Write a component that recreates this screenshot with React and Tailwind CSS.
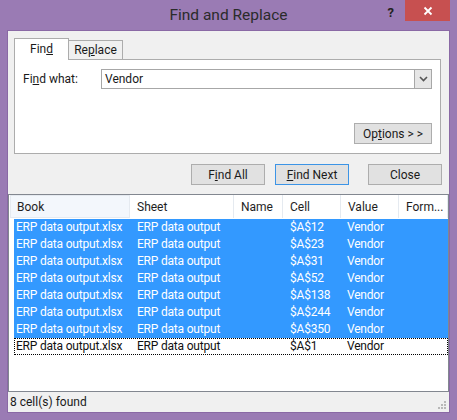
const ROWS = [
  { cell: "$A$12", sel: true },
  { cell: "$A$23", sel: true },
  { cell: "$A$31", sel: true },
  { cell: "$A$52", sel: true },
  { cell: "$A$138", sel: true },
  { cell: "$A$244", sel: true },
  { cell: "$A$350", sel: true },
  { cell: "$A$1", sel: false },
];

const COLS = "grid-cols-[116px_104px_49px_58px_58px_1fr]";

function Btn({ children, focus, className = "" }) {
  return (
    <div
      className={`flex h-[21px] w-[74px] items-center justify-center border bg-[#e1e1e1] text-[12px] text-[#1a1a1a] ${
        focus ? "border-[#3c94e6]" : "border-[#adadad]"
      } ${className}`}
    >
      {children}
    </div>
  );
}

export default function App() {
  return (
    <div
      className="flex h-[420px] w-[457px] flex-col whitespace-nowrap bg-[#9a7bb4]"
      style={{ fontFamily: '"Segoe UI", Roboto, "Noto Sans", sans-serif' }}
    >
      {/* title bar */}
      <div className="grid h-[31px] grid-cols-[1fr_auto_1fr]">
        <div />
        <div className="pt-[4px] text-[15.5px] text-[#2b2b2b]">Find and Replace</div>
        <div className="flex items-start justify-end pr-[7px]">
          <span className="mr-[11px] mt-[3px] text-[13px] font-bold text-[#222]">?</span>
          <div className="flex h-[21px] w-[45px] items-center justify-center bg-[#c75050]">
            <svg width="10" height="10" viewBox="0 0 10 10">
              <path d="M1.5 1.5l7 7M8.5 1.5l-7 7" stroke="#fff" strokeWidth="1.8" />
            </svg>
          </div>
        </div>
      </div>

      {/* client */}
      <div className="mx-[8px] flex flex-1 flex-col bg-[#f0f0f0] outline outline-1 outline-[#8a69a5]">
        <div className="pl-[6px] pr-[8px] pt-[7px]">
          {/* tabs */}
          <div className="flex items-end text-[12px] text-[#1a1a1a]">
            <div className="relative z-10 -mb-px flex h-[22px] w-[55px] items-center justify-center border border-b-0 border-[#acacac] bg-white pb-[2px]">
              <span>
                Fin<u>d</u>
              </span>
            </div>
            <div className="-ml-px flex h-[19px] w-[55px] items-center justify-center border border-b-0 border-[#acacac] bg-[#f0f0f0]">
              <span>
                Re<u>p</u>lace
              </span>
            </div>
          </div>
          {/* panel */}
          <div className="flex h-[95px] flex-col border border-[#acacac] bg-white px-[8px] pt-[9px] pb-[9px]">
            <div className="flex items-center text-[12px] text-[#1a1a1a]">
              <span className="w-[78px]">
                Fi<u>n</u>d what:
              </span>
              <div className="flex h-[20px] flex-1 items-stretch border border-[#a7a7a7] bg-white">
                <span className="flex-1 pl-[3px] leading-[18px]">Vendor</span>
                <div className="flex w-[17px] items-center justify-center border-l border-[#a7a7a7] bg-[#e6e6e6]">
                  <svg width="9" height="6" viewBox="0 0 9 6">
                    <path d="M1 1l3.5 3.5L8 1" fill="none" stroke="#555" strokeWidth="1.6" />
                  </svg>
                </div>
              </div>
            </div>
            <div className="mt-auto flex justify-end">
              <Btn className="w-[78px]">
                <span>
                  Op<u>t</u>ions &gt; &gt;
                </span>
              </Btn>
            </div>
          </div>
        </div>

        {/* buttons */}
        <div className="mt-[10px] flex justify-end pr-[7px]">
          <Btn>
            <span>
              F<u>i</u>nd All
            </span>
          </Btn>
          <Btn focus className="ml-[10px]">
            <span>
              <u>F</u>ind Next
            </span>
          </Btn>
          <Btn className="ml-[19px]">Close</Btn>
        </div>

        {/* results list */}
        <div className="mt-[9px] flex h-[198px] flex-col overflow-hidden border border-[#828790] bg-white text-[12px]">
          <div className="grid h-[23px] shrink-0 grid-cols-[120px_104px_49px_58px_58px_1fr] items-stretch pl-px text-[#1e1e1e]">
            {["Book", "Sheet", "Name", "Cell", "Value", "Form..."].map((h, i) => (
              <div
                key={h}
                className={`flex items-center border-r border-[#e5eaf0] ${
                  i === 0 ? "border border-[#dfe8f2] bg-[#f3f7fc] pl-[6px]" : "pl-[7px]"
                }`}
              >
                {h}
              </div>
            ))}
          </div>
          <div className="ml-[5px] mt-[1px] flex flex-col tracking-[-0.2px]">
            {ROWS.map((r) => (
              <div
                key={r.cell}
                className={`grid h-[17px] ${COLS} items-center overflow-hidden leading-[17px] ${
                  r.sel
                    ? "bg-[#3399ff] text-white"
                    : "text-[#111] outline outline-1 -outline-offset-1 outline-dotted outline-black"
                }`}
              >
                <span className="pl-[2px]">ERP data output.xlsx</span>
                <span className="pl-[7px]">ERP data output</span>
                <span />
                <span className="pl-[7px]">{r.cell}</span>
                <span className="pl-[6px]">Vendor</span>
                <span />
              </div>
            ))}
          </div>
        </div>

        {/* status */}
        <div className="flex flex-1 items-center justify-between pl-[2px] text-[12px] text-[#1a1a1a]">
          <span>8 cell(s) found</span>
          <svg width="10" height="10" viewBox="0 0 10 10" className="mb-[-6px] mr-[2px]">
            {[
              [7, 1],
              [4, 4],
              [7, 4],
              [1, 7],
              [4, 7],
              [7, 7],
            ].map(([x, y]) => (
              <rect key={`${x}-${y}`} x={x} y={y} width="2" height="2" fill="#b8b8b8" />
            ))}
          </svg>
        </div>
      </div>
      <div className="h-[8px]" />
    </div>
  );
}
